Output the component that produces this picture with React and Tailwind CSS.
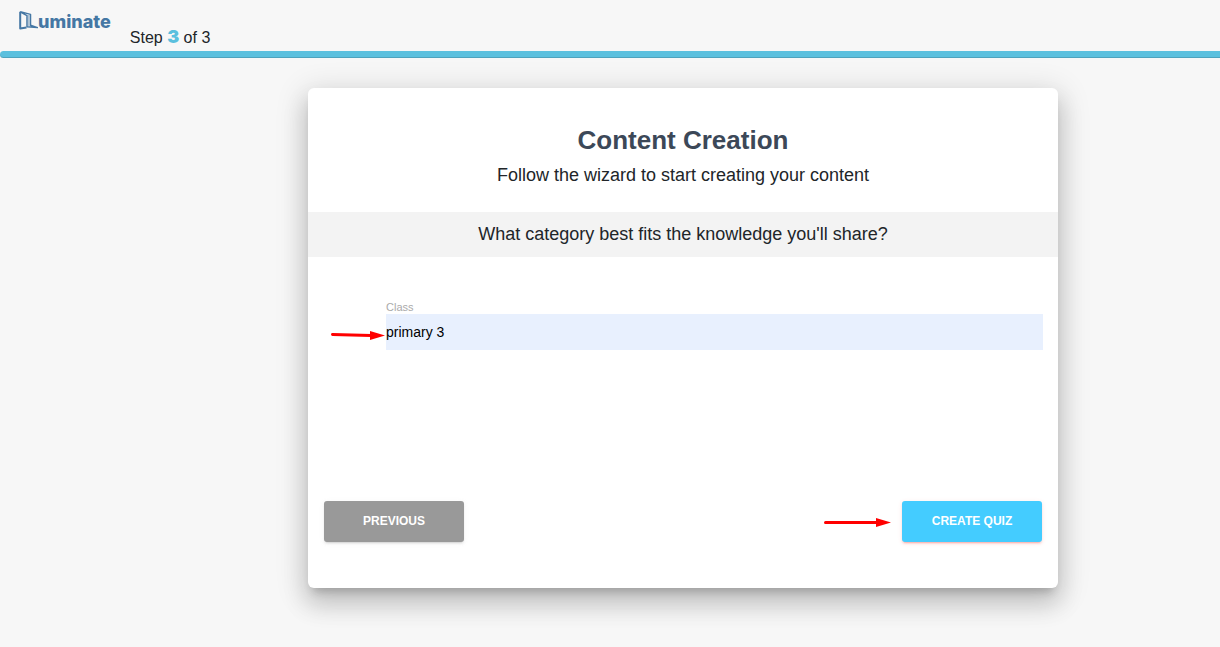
function Logo() {
  return (
    <a href="#home" aria-label="iLuminate" className="flex items-start text-[#4577a4]">
      <svg width="20" height="22" viewBox="0 0 20 22" fill="none" stroke="currentColor" aria-hidden="true">
        <path d="M2.2 2.8V19.6L8.5 18.4" strokeWidth="2" strokeLinejoin="round" />
        <path d="M2.2 2.6L12.5 5.4V16.2L19.5 18.6L9 17.8V6.6L2.2 2.8" strokeWidth="1.5" strokeLinejoin="round" />
        <path d="M10.8 6V17" strokeWidth="1.4" opacity="0.45" />
      </svg>
      <span className="font-['Inter',sans-serif] text-lg leading-[26px] font-extrabold">uminate</span>
    </a>
  );
}

function Arrow({ className, width, tilt }) {
  return (
    <svg className={className} width={width} height="12" viewBox={`0 0 ${width} 12`} aria-hidden="true">
      <path d={`M1.5 ${6.5 - tilt}L${width - 14} 6.5`} stroke="#ff0000" strokeWidth="3" strokeLinecap="round" />
      <path d={`M${width - 15} 2L${width} 6.5L${width - 15} 11Z`} fill="#ff0000" />
    </svg>
  );
}

export default function App() {
  return (
    <div className="min-h-screen overflow-x-hidden bg-[#f7f7f7] pb-14 font-['Liberation_Sans',Arial,sans-serif] text-[#212529]">
      <header>
        <div className="flex h-[51px] items-start gap-[19px] pt-[9px] pl-[18px]">
          <Logo />
          <p className="pt-4 text-base leading-6">
            Step <strong className="font-['Inter',sans-serif] text-lg leading-6 font-black text-[#5bc0de]">3</strong> of 3
          </p>
        </div>
        <div
          role="progressbar"
          aria-label="Wizard progress"
          aria-valuemin={1}
          aria-valuemax={3}
          aria-valuenow={3}
          className="h-[7px] rounded-l bg-[#5bc0de] shadow-[inset_0_-1px_0_rgba(0,0,0,0.15)]"
        />
      </header>

      <main className="pt-[30px] pl-[146px]">
        <form
          onSubmit={(event) => event.preventDefault()}
          className="mx-auto flex min-h-[500px] max-w-[750px] flex-col rounded-md bg-white shadow-[0_16px_24px_2px_rgba(0,0,0,0.14),0_6px_30px_5px_rgba(0,0,0,0.12),0_8px_10px_-5px_rgba(0,0,0,0.2)]"
        >
          <div className="px-4 pt-9 pb-[23px] text-center">
            <h1 className="text-[26px] leading-8 font-bold text-[#3c4858]">Content Creation</h1>
            <p className="pt-[5px] text-lg leading-7">Follow the wizard to start creating your content</p>
          </div>
          <h2 className="bg-[#f3f3f3] px-4 pt-2 pb-[9px] text-center text-lg leading-7">
            What category best fits the knowledge you'll share?
          </h2>

          <div className="flex flex-col pt-[43px] pr-[15px] pl-[78px]">
            <label htmlFor="class" className="text-[11px] leading-[14px] text-[#aaaaaa]">
              Class
            </label>
            <div className="relative">
              <input
                id="class"
                type="text"
                defaultValue="primary 3"
                className="block h-9 w-full bg-[#e8f0fe] text-sm text-black outline-none"
              />
              <Arrow className="absolute top-[15px] right-full mr-px" width={54} tilt={1} />
            </div>
          </div>

          <div className="mt-auto flex justify-between px-4 pb-[46px]">
            <button
              type="button"
              className="h-[41px] w-[140px] rounded-[3px] bg-[#999999] pb-[2px] text-xs font-bold text-white uppercase shadow-[0_2px_2px_0_rgba(153,153,153,0.14),0_3px_1px_-2px_rgba(153,153,153,0.2),0_1px_5px_0_rgba(153,153,153,0.12)]"
            >
              Previous
            </button>
            <div className="relative">
              <Arrow className="absolute top-[15px] right-full mr-[11px]" width={67} tilt={0} />
              <button
                type="submit"
                className="h-[41px] w-[140px] rounded-[3px] bg-[#44ccff] pb-[2px] text-xs font-bold text-white uppercase shadow-[0_2px_2px_0_rgba(244,67,54,0.14),0_3px_1px_-2px_rgba(244,67,54,0.2),0_1px_5px_0_rgba(244,67,54,0.12)]"
              >
                Create Quiz
              </button>
            </div>
          </div>
        </form>
      </main>
    </div>
  );
}
